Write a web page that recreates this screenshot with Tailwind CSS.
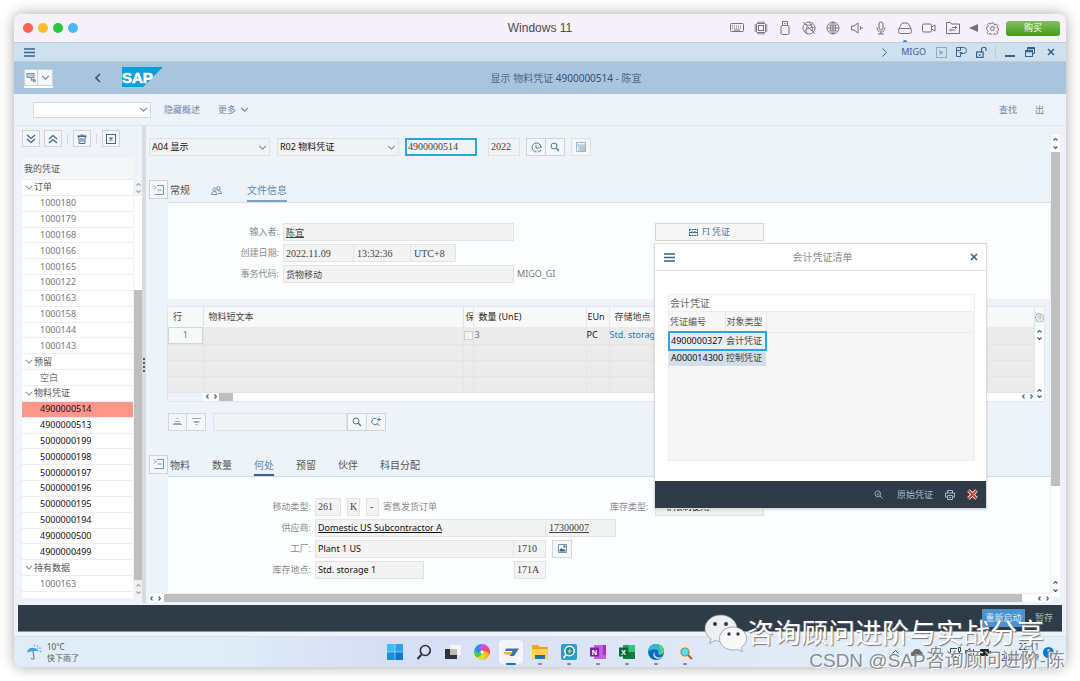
<!DOCTYPE html>
<html lang="zh-CN">
<head>
<meta charset="utf-8">
<meta name="viewport" content="width=device-width, initial-scale=1">
<title>显示 物料凭证 4900000514 - 陈宜</title>
<script src="https://cdn.jsdelivr.net/npm/@tailwindcss/browser@4"></script>
</head>
<body class="bg-white font-['Noto_Sans','Noto_Sans_CJK_SC',sans-serif] text-[9px] leading-3 text-[#555]">

<svg class="hidden" aria-hidden="true">
  <symbol id="down" viewBox="0 0 10 6"><path d="M1 1l4 4 4-4" fill="none" stroke="currentColor" stroke-width="1.3"/></symbol>
  <symbol id="sup" viewBox="0 0 5 3"><path d="M.5 2.500l2-2 2 2" fill="none" stroke="currentColor" stroke-width="1.2"/></symbol>
  <symbol id="sdown" viewBox="0 0 5 3"><path d="M.5 .5l2 2 2-2" fill="none" stroke="currentColor" stroke-width="1.2"/></symbol>
  <symbol id="sleft" viewBox="0 0 3 5"><path d="M2.500 .5l-2 2 2 2" fill="none" stroke="currentColor" stroke-width="1.2"/></symbol>
  <symbol id="sright" viewBox="0 0 3 5"><path d="M.5 .5l2 2-2 2" fill="none" stroke="currentColor" stroke-width="1.2"/></symbol>
  <symbol id="left" viewBox="0 0 6 10"><path d="M5 1L1 5l4 4" fill="none" stroke="currentColor" stroke-width="1.6"/></symbol>
  <symbol id="bars" viewBox="0 0 11 9"><path d="M0 1h11M0 4.5h11M0 8h11" stroke="currentColor" stroke-width="1.3"/></symbol>
  <symbol id="close" viewBox="0 0 8 8"><path d="M1 1l6 6M7 1L1 7" stroke="currentColor" stroke-width="1.6"/></symbol>
  <symbol id="glass" viewBox="0 0 10 10"><circle cx="4" cy="4" r="3" fill="none" stroke="currentColor"/><path d="M6.3 6.3L9 9" stroke="currentColor" stroke-width="1.5"/></symbol>
  <symbol id="panel" viewBox="0 0 12 12"><path d="M4 1.500h6.500v9H1.500M4.500 6h4M1 1.500L3 3.500 1 5.500" fill="none" stroke="currentColor"/></symbol>
  <symbol id="gear" viewBox="0 0 14 14"><path d="M5.900 1h2.200l.4 1.700 1.200.5 1.500-.9 1.500 1.500-.9 1.500.5 1.200 1.200.4v2.200l-1.200.3-.6 1.200.9 1.400-1.500 1.500-1.500-.9-1.200.5-.3 1.200H5.900l-.4-1.500-1.200-.5-1.500.9-1.500-1.500.9-1.500-.5-1.200L.5 8V5.900l1.400-.4.500-1.200-.9-1.500L3 1.300l1.500.9 1.100-.5z" fill="none" stroke="currentColor"/><circle cx="7" cy="7" r="2.200" fill="none" stroke="currentColor"/></symbol>
</svg>

<div class="flex min-h-screen p-[14px]">
<div class="relative flex flex-1 flex-col rounded-lg bg-[#edf3f8] shadow-[0_0_14px_rgba(0,0,0,0.35)]">

  <!-- virtual machine title bar -->
  <div class="relative flex h-7 items-center rounded-t-lg bg-[#f6f0f8] px-[9px]">
    <div class="flex gap-[5px]">
      <span class="size-[10px] rounded-full bg-[#ff5f57]"></span>
      <span class="size-[10px] rounded-full bg-[#febc2e]"></span>
      <span class="size-[10px] rounded-full bg-[#28c840]"></span>
      <span class="size-[10px] rounded-full bg-[#4cb5f5]"></span>
    </div>
    <h1 class="absolute inset-x-0 text-center font-['Liberation_Sans'] text-[12px] leading-4 text-[#4c4a4e]">Windows 11</h1>
    <div class="absolute top-0 right-[6px] flex h-7 items-center text-[#747078]">
      <div class="mr-[9px] flex items-center gap-[10px]">
      <svg class="size-[14px]" viewBox="0 0 14 14" fill="none" stroke="currentColor"><rect x=".5" y="2.500" width="13" height="8" rx="1"/><path d="M2 5h10M2 7h10" stroke-dasharray="1 1"/><path d="M4 9h6"/></svg>
      <svg class="size-[14px]" viewBox="0 0 14 14" fill="none" stroke="currentColor"><rect x="2.500" y="2.500" width="9" height="9" rx="1"/><rect x="4.500" y="4.500" width="5" height="5"/><path d="M4 .5v2M6 .5v2M8 .5v2M10 .5v2M4 11.500v2M6 11.500v2M8 11.500v2M10 11.500v2M.5 4h2M.5 6h2M.5 8h2M.5 10h2M11.500 4h2M11.500 6h2M11.500 8h2M11.500 10h2"/></svg>
      <svg class="size-[14px]" viewBox="0 0 14 14" fill="none" stroke="currentColor"><rect x="3" y="4.500" width="8" height="9" rx="1.500"/><path d="M4.500 4.500v-4h5v4M6 2.500h.8M7.500 2.500h.8"/></svg>
      <svg class="size-[14px]" viewBox="0 0 14 14" fill="none" stroke="currentColor" stroke-width=".9"><circle cx="7" cy="7" r="6"/><path d="M1 1l12 12M4 3.500C6 5 10 4 11 2.500M2.500 11c1-3 3-4 5-3.500M7 1c2 2 4 6 3.500 9M13 7c-2-1-4-1-5 0M5 13C4 10 4 8 5 6"/></svg>
      <svg class="size-[14px]" viewBox="0 0 14 14" fill="none" stroke="currentColor" stroke-width=".9"><circle cx="7" cy="7" r="6"/><path d="M7 1v12M1 7h12M2.500 3.500c3 2 6 2 9 0M2.500 10.500c3-2 6-2 9 0M7 1C3.500 4 3.500 10 7 13M7 1c3.500 3 3.500 9 0 12"/></svg>
      <svg class="size-[14px]" viewBox="0 0 14 14" fill="none" stroke="currentColor"><path d="M1.500 5H4l4-3v10L4 9H1.500zM10 5c.8 1.200.8 2.800 0 4M12 6v2"/></svg>
      <svg class="size-[14px]" viewBox="0 0 14 14" fill="none" stroke="currentColor"><rect x="5" y="1" width="4" height="8" rx="2"/><path d="M3 6.500c0 6 8 6 8 0M7 11v2M4 13h6"/></svg>
      <svg class="size-[14px]" viewBox="0 0 14 14" fill="none" stroke="currentColor"><path d="M.8 8l2.700-5c.3-.6.8-1 1.500-1h4c.7 0 1.200.4 1.500 1l2.700 5"/><rect x=".6" y="7.500" width="12.800" height="5" rx="2"/></svg>
      <svg class="size-[14px]" viewBox="0 0 14 14" fill="none" stroke="currentColor"><rect x=".5" y="3" width="9" height="8" rx="1.500"/><path d="M9.500 6l3.500-2v6l-3.500-2"/></svg>
      <svg class="size-[14px]" viewBox="0 0 14 14" fill="none" stroke="currentColor"><path d="M.5 12.500v-11h4l1 1.500h8v9.500zM4 9h5M5 7.500L3.500 9 5 10.500M10.500 6.500H6M9 5l1.500 1.500L9 8"/></svg>
      </div>
      <svg class="mr-2 h-2 w-[9px]" viewBox="0 0 9 8" fill="currentColor"><path d="M0 4l9-4v8z"/></svg>
      <svg class="mr-[7px] size-[13px]"><use href="#gear"/></svg>
      <button class="h-[15px] w-[54px] rounded-[3px] bg-linear-to-b from-[#7fc05c] to-[#419c14] text-[9px] text-white">购买</button>
    </div>
    <span class="absolute right-[159px] bottom-0 h-[2px] w-1 rounded-t-full bg-[#1a84f7]"></span>
  </div>

  <!-- SAP menu bar -->
  <div class="flex h-5 items-center border-y border-[#b9cddd] bg-[#cfe0ee] pr-[11px] pl-[10px] text-[#35638c]">
    <button aria-label="菜单"><svg class="block h-[9px] w-[11px]"><use href="#bars"/></svg></button>
    <div class="ml-auto flex items-center">
      <svg class="mr-[14px] h-[9px] w-[5px]" viewBox="0 0 5 9" fill="none" stroke="currentColor"><path d="M.5.5l4 4-4 4"/></svg>
      <span class="mr-[10px] text-[9px]">MIGO</span>
      <svg class="mr-[9px] size-[11px] text-[#8fabc4]" viewBox="0 0 11 11" fill="none" stroke="currentColor"><rect x=".5" y=".5" width="10" height="10"/><path d="M4 3.500v4l3-2z" fill="currentColor"/></svg>
      <svg class="mr-[9px] size-[11px]" viewBox="0 0 11 11" fill="none" stroke="currentColor"><path d="M.5 9.500v-9h7a3 3 0 010 6h-3v3zM4.500.5v3h-4M3.500 5.500h3"/></svg>
      <svg class="mr-[8px] size-[11px]" viewBox="0 0 11 11" fill="none" stroke="currentColor" stroke-width="1.200"><rect x=".6" y="5" width="6.500" height="5.400"/><path d="M5.500 5V2.500a2.300 2.300 0 014.600 0V4M3.800 7v2"/></svg>
      <span class="mr-[9px] h-3 w-px bg-[#bccfde]"></span>
      <svg class="mr-[10px] size-[10px]" viewBox="0 0 10 10"><path d="M0 9h10" stroke="currentColor" stroke-width="2"/></svg>
      <svg class="mr-[12px] size-[10px]" viewBox="0 0 10 10" fill="none" stroke="currentColor"><path d="M2.500 3V.5h7v6H8"/><path d="M2.500 1.200h7M.5 4.200h7" stroke-width="2"/><rect x=".5" y="3.500" width="7" height="6"/></svg>
      <button aria-label="关闭"><svg class="block size-2"><use href="#close"/></svg></button>
    </div>
  </div>

  <!-- page header -->
  <header class="relative flex h-8 items-center bg-[#a9c5de] pl-[10px]">
    <div class="flex h-[19px] w-[29px] border-b-2 border-white">
      <button aria-label="对象服务" class="flex w-[14px] items-center justify-center border border-[#c9d3dc] bg-[#f5f7f8] text-[#7c98b2]"><svg class="size-[11px]" viewBox="0 0 11 11"><rect x="1" y="1.500" width="7" height="4" fill="#bccbd9" stroke="currentColor"/><path d="M5 5.500v3h3M7.500 6.500l2.500 2-2.500 2z" fill="currentColor" stroke="currentColor" stroke-width=".6"/></svg></button>
      <button aria-label="展开" class="flex w-[15px] items-center justify-center border border-l-0 border-[#c9d3dc] bg-[#f5f7f8] text-[#6886a3]"><svg class="h-[5px] w-[9px]"><use href="#down"/></svg></button>
    </div>
    <button aria-label="返回" class="ml-[42px] text-[#33587c]"><svg class="block h-[10px] w-[6px]"><use href="#left"/></svg></button>
    <svg class="mb-[2px] ml-[21px] h-5 w-[41px]" viewBox="0 0 41 20" role="img" aria-label="SAP"><path d="M0 0h41L21 20H0z" fill="#069fe0"/><text x="0" y="15.500" font-family="Liberation Sans" font-weight="700" font-size="15" fill="#fff" stroke="#fff" stroke-width=".6">SAP</text></svg>
    <h2 class="absolute inset-x-0 pl-[52px] text-center text-[10px] text-[#49688a]">显示 物料凭证 <span class="text-[#2f5275]">4900000514</span> - 陈宜</h2>
  </header>

  <!-- application toolbar -->
  <div class="flex h-8 items-center border-b border-[#dee6ed] pr-[22px] pl-[19px] text-[#6b8aa8]">
    <div class="relative w-[118px]">
      <select aria-label="命令" class="block h-4 w-full appearance-none border border-[#d3dbe2] bg-white"><option></option></select>
      <svg class="pointer-events-none absolute top-[5px] right-[3px] h-[5px] w-[9px]"><use href="#down"/></svg>
    </div>
    <button class="ml-[13px]">隐藏概述</button>
    <button class="ml-[18px] flex items-center gap-1">更多<svg class="h-[5px] w-[9px]"><use href="#down"/></svg></button>
    <button class="ml-auto">查找</button>
    <button class="ml-[18px]">出</button>
  </div>

  <div class="flex flex-1">

    <!-- overview tree -->
    <aside class="flex w-32 shrink-0 flex-col pt-1 pb-[5px] pl-2">
      <div class="mb-[11px] flex items-center text-[#3d6a95]">
        <button aria-label="全部展开" class="flex h-[17px] w-[18px] items-center justify-center border border-[#ced3d8] bg-[#f5f6f7]"><svg class="size-[10px]" viewBox="0 0 10 10" fill="none" stroke="currentColor" stroke-width="1.300"><path d="M1 1l4 3.500L9 1M1 5l4 3.500L9 5"/></svg></button>
        <button aria-label="全部折叠" class="ml-1 flex h-[17px] w-[18px] items-center justify-center border border-[#ced3d8] bg-[#f5f6f7]"><svg class="size-[10px]" viewBox="0 0 10 10" fill="none" stroke="currentColor" stroke-width="1.300"><path d="M1 5l4-3.500L9 5M1 9l4-3.500L9 9"/></svg></button>
        <span class="mx-[5px] h-[10px] w-px bg-[#d3dae0]"></span>
        <button aria-label="删除" class="flex h-[17px] w-[18px] items-center justify-center border border-[#ced3d8] bg-[#f5f6f7]"><svg class="size-[10px]" viewBox="0 0 10 10" fill="none" stroke="currentColor"><path d="M.5 2.200h9" stroke-width="1.600"/><path d="M3.500 1h3M1.800 3l.4 6.500h5.600L8.200 3M4 4v4M6 4v4"/></svg></button>
        <span class="mx-[5px] h-[10px] w-px bg-[#d3dae0]"></span>
        <button aria-label="关闭概述" class="flex h-[17px] w-[18px] items-center justify-center border border-[#ced3d8] bg-[#f5f6f7]"><svg class="size-[10px]" viewBox="0 0 10 10" fill="none" stroke="currentColor"><rect x=".5" y=".5" width="9" height="9"/><path d="M3.500 3.500l3 3M6.500 3.500l-3 3" stroke-width="1.300"/></svg></button>
      </div>
      <h3 class="mr-[9px] h-[22px] border-b border-[#e8ebed] bg-[#f5f6f7] pl-[2px] leading-[22px]">我的凭证</h3>
      <div class="flex flex-1">
        <ul class="flex flex-1 flex-col bg-white pb-[6px] text-[#777] [&>li]:flex [&>li]:flex-1 [&>li]:items-center [&>li]:border-b [&>li]:border-[#eceef0] [&>li]:pl-[18px]">
          <li><span class="-ml-[15px] flex items-center gap-px text-[#555]"><svg class="h-[5px] w-2 text-[#6f93b3]"><use href="#down"/></svg>订单</span></li>
          <li>1000180</li>
          <li>1000179</li>
          <li>1000168</li>
          <li>1000166</li>
          <li>1000165</li>
          <li>1000122</li>
          <li>1000163</li>
          <li>1000158</li>
          <li>1000144</li>
          <li>1000143</li>
          <li><span class="-ml-[15px] flex items-center gap-px text-[#555]"><svg class="h-[5px] w-2 text-[#6f93b3]"><use href="#down"/></svg>预留</span></li>
          <li>空白</li>
          <li><span class="-ml-[15px] flex items-center gap-px text-[#555]"><svg class="h-[5px] w-2 text-[#6f93b3]"><use href="#down"/></svg>物料凭证</span></li>
          <li class="bg-[#ff968c] text-[#111]">4900000514</li>
          <li class="text-[#111]">4900000513</li>
          <li class="text-[#111]">5000000199</li>
          <li class="text-[#111]">5000000198</li>
          <li class="text-[#111]">5000000197</li>
          <li class="text-[#111]">5000000196</li>
          <li class="text-[#111]">5000000195</li>
          <li class="text-[#111]">5000000194</li>
          <li class="text-[#111]">4900000500</li>
          <li class="text-[#111]">4900000499</li>
          <li><span class="-ml-[15px] flex items-center gap-px text-[#555]"><svg class="h-[5px] w-2 text-[#6f93b3]"><use href="#down"/></svg>持有数据</span></li>
          <li>1000163</li>
        </ul>
        <div class="ml-px flex w-2 flex-col items-center bg-white text-[#a8adb2]">
          <div class="flex w-full flex-col items-center gap-1 bg-[#f1f1f1] py-[3px]"><svg class="h-[3px] w-[5px]"><use href="#sup"/></svg><svg class="h-[3px] w-[5px]"><use href="#sdown"/></svg></div>
          <div class="mt-[94px] w-full flex-1 bg-[#bfbfbf]"></div>
          <div class="flex w-full flex-col items-center gap-1 bg-[#f1f1f1] py-[4px]"><svg class="h-[3px] w-[5px]"><use href="#sup"/></svg><svg class="h-[3px] w-[5px]"><use href="#sdown"/></svg></div>
        </div>
      </div>
    </aside>

    <div class="flex w-1 shrink-0 items-center justify-center bg-[#d9dbde]"><svg class="h-[14px] w-[2px]" viewBox="0 0 2 14" fill="#35638c"><path d="M0 0h2v2H0zM0 4h2v2H0zM0 8h2v2H0zM0 12h2v2H0z"/></svg></div>

    <!-- work area -->
    <main class="flex min-w-0 flex-1 flex-col pt-3 pb-px pl-[3px]">
      <div class="flex h-[18px] text-[#444]">
        <div class="relative w-[121px]">
          <select aria-label="操作" class="block h-full w-full appearance-none border border-[#dfe2e5] bg-[#f1f2f3] pl-[2px] text-[#111]"><option>A04 显示</option></select>
          <svg class="pointer-events-none absolute top-[7px] right-[3px] h-[5px] w-[9px] text-[#6f93b3]"><use href="#down"/></svg>
        </div>
        <div class="relative ml-[7px] w-[122px]">
          <select aria-label="参考凭证" class="block h-full w-full appearance-none border border-[#dfe2e5] bg-[#f1f2f3] pl-[2px] text-[#111]"><option>R02 物料凭证</option></select>
          <svg class="pointer-events-none absolute top-[7px] right-[3px] h-[5px] w-[9px] text-[#6f93b3]"><use href="#down"/></svg>
        </div>
        <input aria-label="物料凭证" readonly value="4900000514" class="ml-[6px] w-[72px] border-2 border-[#2ea3dd] bg-[#f1f2f3] px-px font-['Liberation_Serif'] text-[10px]">
        <input aria-label="年度" readonly value="2022" class="ml-[11px] w-8 border border-[#dfe2e5] bg-[#f1f2f3] px-[2px] font-['Liberation_Serif'] text-[10px]">
        <button aria-label="执行" class="ml-[6px] flex w-5 items-center justify-center border border-[#cfd4d8] bg-[#f5f6f7] text-[#4f7ba3]"><svg class="size-[11px]" viewBox="0 0 11 11" fill="none" stroke="currentColor"><path d="M10 6A4.500 4.500 0 105.500 10M10 6A4.500 4.500 0 009 2.500M5 3v3h3.500M6.500 8.500l2 1.500L10 8"/></svg></button>
        <button aria-label="查找" class="-ml-px flex w-5 items-center justify-center border border-[#cfd4d8] bg-[#f5f6f7] text-[#4f7ba3]"><svg class="size-[10px]"><use href="#glass"/></svg></button>
        <button aria-label="布局" class="ml-[6px] flex w-5 items-center justify-center border border-[#dde1e4] bg-[#f5f6f7] text-[#9db6cc]"><svg class="size-[10px]" viewBox="0 0 10 10" fill="none" stroke="currentColor"><path d="M.5.5h9v9h-9zM.5 3h9M3 3v6.500"/><path d="M4 4h5v5H4z" fill="#b5c7d7" stroke="none"/></svg></button>
      </div>

      <!-- header tabs -->
      <div class="mt-6 flex h-[23px] items-start">
        <button aria-label="收起抬头" class="flex size-[19px] items-center justify-center border border-[#ced3d8] bg-[#f5f6f7] text-[#7397b8]"><svg class="size-3"><use href="#panel"/></svg></button>
        <nav class="flex h-full flex-1 items-stretch gap-[21px] border-b border-[#d5e1ec] pl-[2px] text-[10px] leading-5">
          <a href="#general">常规</a>
          <a href="#partner" aria-label="业务伙伴" class="flex items-center text-[#6f93b3]"><svg class="mb-[2px] h-[9px] w-[11px]" viewBox="0 0 11 9" fill="none" stroke="currentColor"><circle cx="3.500" cy="3.500" r="1.600"/><circle cx="7.500" cy="2.200" r="1.700"/><path d="M.5 8.500c0-4 5.500-4 5.500 0zM6.500 5c2.500-1 4 .5 4 2.500H7"/></svg></a>
          <a href="#doc" class="ml-1 border-b-2 border-[#7fa3c3] text-[#5d8ab2]">文件信息</a>
        </nav>
      </div>
      <section class="mr-px ml-[19px] flex flex-col gap-[3px] bg-[#fcfdfe] pt-5 pb-4 text-[#444]">
        <div class="flex h-[18px] items-center">
          <label for="user" class="w-[111px] text-right text-[#8b8b8b]">输入者:</label>
          <input id="user" readonly value="陈宜" class="ml-1 h-full w-[231px] border border-[#e2e3e4] bg-[#f3f3f3] px-[2px] underline">
          <button class="ml-[141px] flex h-full w-[109px] items-center justify-center gap-1 border border-[#d3d6d9] bg-[#f7f7f7] text-[#55789a]"><svg class="size-[9px]" viewBox="0 0 9 9" fill="none" stroke="#35638c"><path d="M0 1.500h9M0 7.500h9M.5 1v7M8.500 1v7M1 4.500h7M3 3v3M6 3v3" stroke-dasharray="2 .6"/></svg>FI 凭证</button>
        </div>
        <div class="flex h-[18px] items-center">
          <label for="date" class="w-[111px] text-right text-[#8b8b8b]">创建日期:</label>
          <input id="date" readonly value="2022.11.09" class="ml-1 h-full w-[71px] border border-[#e2e3e4] bg-[#f3f3f3] px-[2px] font-['Liberation_Serif'] text-[10px]">
          <input aria-label="创建时间" readonly value="13:32:36" class="h-full w-[57px] border border-l-0 border-[#e2e3e4] bg-[#f3f3f3] px-[3px] font-['Liberation_Serif'] text-[10px]">
          <input aria-label="时区" readonly value="UTC+8" class="h-full w-[45px] border border-l-0 border-[#e2e3e4] bg-[#f3f3f3] px-[3px] font-['Liberation_Serif'] text-[10px]">
        </div>
        <div class="flex h-[18px] items-center">
          <label for="tcode" class="w-[111px] text-right text-[#8b8b8b]">事务代码:</label>
          <input id="tcode" readonly value="货物移动" class="ml-1 h-full w-[231px] border border-[#e2e3e4] bg-[#f3f3f3] px-[2px]">
          <span class="ml-[3px] text-[#777]">MIGO_GI</span>
        </div>
      </section>

      <!-- item table -->
      <div class="mt-[7px] mr-[6px] ml-[18px] border border-[#e2e7eb] bg-white">
        <div class="flex">
          <table class="w-full flex-1 table-fixed border-collapse bg-[#ebebeb] text-[#444] [&_td]:border-r [&_td]:border-b [&_td]:border-[#e4e5e6] [&_td]:p-0 [&_th]:border-r [&_th]:border-[#e2e4e6] [&_th]:p-0 [&_th]:text-left [&_th]:font-normal">
            <colgroup><col class="w-[35px]"><col class="w-[260px]"><col class="w-[10px]"><col class="w-[113px]"><col class="w-[23px]"><col class="w-[69px]"><col></colgroup>
            <thead><tr class="h-5 bg-[#f7f8f8] whitespace-nowrap"><th><span class="pl-[5px]">行</span></th><th><span class="pl-[5px]">物料短文本</span></th><th class="overflow-hidden"><span class="pl-[2px]">保</span></th><th class="text-[#222]"><span class="pl-[5px]">数量 (UnE)</span></th><th class="text-[#222]"><span class="pl-px">EUn</span></th><th><span class="pl-[5px]">存储地点</span></th><th></th></tr></thead>
            <tbody>
              <tr class="h-[17px] whitespace-nowrap"><td class="bg-[#f7f8f8] text-center text-[#4f7ba3] outline -outline-offset-1 outline-[#d3d6d9]">1</td><td></td><td><input type="checkbox" aria-label="选择" class="block size-[9px] appearance-none border border-[#cfd2d5] bg-[#f3f3f3]"></td><td class="text-[#3f86b8]"><span class="pl-px">3</span></td><td class="text-[#111]">PC</td><td class="overflow-hidden text-[#1f78b0]">Std. storage 1</td><td></td></tr>
              <tr class="h-4"><td></td><td></td><td></td><td></td><td></td><td></td><td></td></tr>
              <tr class="h-4"><td></td><td></td><td></td><td></td><td></td><td></td><td></td></tr>
              <tr class="h-4"><td></td><td></td><td></td><td></td><td></td><td></td><td></td></tr>
            </tbody>
          </table>
          <div class="flex w-[9px] shrink-0 flex-col items-center text-[#35638c]">
            <div class="flex h-5 w-full items-center justify-center bg-[#f7f8f8]"><svg class="size-[9px] shrink-0 text-[#6f93b3]"><use href="#gear"/></svg></div>
            <svg class="mt-[3px] h-[3px] w-[5px]"><use href="#sup"/></svg><svg class="mt-1 h-[3px] w-[5px]"><use href="#sdown"/></svg>
            <svg class="mt-auto mb-px h-[3px] w-[5px]"><use href="#sup"/></svg>
          </div>
        </div>
        <div class="flex h-2 items-center text-[#35638c]">
          <div class="h-full w-[35px] bg-[#edf3f8]"></div>
          <svg class="ml-[3px] h-[5px] w-[3px]"><use href="#sleft"/></svg><svg class="ml-[5px] h-[5px] w-[3px]"><use href="#sright"/></svg>
          <div class="ml-[2px] h-full w-[14px] bg-[#bfbfbf]"></div>
          <svg class="ml-auto h-[5px] w-[3px]"><use href="#sleft"/></svg><svg class="ml-[5px] h-[5px] w-[3px]"><use href="#sright"/></svg><svg class="mr-[2px] ml-[4px] h-[3px] w-[5px]"><use href="#sdown"/></svg>
        </div>
      </div>

      <div class="mt-[11px] ml-[19px] flex h-[18px] text-[#4f7ba3]">
        <button aria-label="上移" class="flex w-[19px] items-center justify-center border border-[#d3d6d9] bg-[#f5f6f7] text-[#8fabc4]"><svg class="h-[7px] w-[9px]" viewBox="0 0 9 7" stroke="currentColor"><path d="M3.500.5h2M2 3.500h5M0 6.500h9M1 5.500h7" /></svg></button>
        <button aria-label="下移" class="flex w-[19px] items-center justify-center border border-l-0 border-[#d3d6d9] bg-[#f5f6f7] text-[#8fabc4]"><svg class="h-[7px] w-[9px]" viewBox="0 0 9 7" stroke="currentColor"><path d="M0 .5h9M1.500 3.500h6M2.500 4.500h4M3.500 6.500h2"/></svg></button>
        <input aria-label="查找行" class="ml-[7px] w-[134px] border border-[#dfe2e5] bg-[#f1f2f3]">
        <button aria-label="查找" class="flex w-[20px] items-center justify-center border border-[#cfd4d8] bg-[#f5f6f7]"><svg class="size-[10px]"><use href="#glass"/></svg></button>
        <button aria-label="查找下一个" class="-ml-px flex w-[20px] items-center justify-center border border-[#cfd4d8] bg-[#f5f6f7]"><svg class="size-[10px]" viewBox="0 0 10 10" fill="none" stroke="currentColor"><path d="M5.500 1.700A3.200 3.200 0 106.800 6M6.300 6.500L8.500 9M8 .5v4M6 2.500h4"/></svg></button>
      </div>

      <!-- detail tabs -->
      <div class="mt-6 flex h-[22px] items-start">
        <button aria-label="收起明细" class="flex size-[19px] items-center justify-center border border-[#ced3d8] bg-[#f5f6f7] text-[#7397b8]"><svg class="size-3"><use href="#panel"/></svg></button>
        <nav class="flex h-full flex-1 gap-[22px] border-b border-[#cbdcea] pl-[2px] text-[10px] leading-5">
          <a href="#material">物料</a>
          <a href="#quantity">数量</a>
          <a href="#where" class="border-b-2 border-[#35638c] text-[#5d8ab2]">何处</a>
          <a href="#reserve">预留</a>
          <a href="#partner2">伙伴</a>
          <a href="#account">科目分配</a>
        </nav>
      </div>
      <section class="mr-px mb-px ml-[19px] flex flex-1 flex-col gap-[3px] bg-[#fcfdfe] pt-[21px] text-[#111]">
        <div class="flex h-[18px] items-center">
          <label for="mvt" class="w-[143px] text-right text-[#8b8b8b]">移动类型:</label>
          <input id="mvt" readonly value="261" class="ml-1 h-full w-[26px] border border-[#e2e3e4] bg-[#f3f3f3] px-[2px] font-['Liberation_Serif'] text-[10px] text-[#444]">
          <input aria-label="特殊库存" readonly value="K" class="ml-[6px] h-full w-[13px] border border-[#e2e3e4] bg-[#f3f3f3] px-[2px] font-['Liberation_Serif'] text-[10px] text-[#444]">
          <input aria-label="借贷标识" readonly value="-" class="ml-[6px] h-full w-[13px] border border-[#e2e3e4] bg-[#f3f3f3] px-[3px] font-['Liberation_Serif'] text-[10px] text-[#444]">
          <span class="ml-1 text-[#8b8b8b]">寄售发货订单</span>
          <label for="stock" class="ml-[173px] text-[#8b8b8b]">库存类型:</label>
          <input id="stock" readonly value="非限制使用" class="ml-[7px] h-full w-[109px] border border-[#e2e3e4] bg-[#f3f3f3] px-2">
        </div>
        <div class="flex h-[18px] items-center">
          <label for="vendor" class="w-[143px] text-right text-[#8b8b8b]">供应商:</label>
          <input id="vendor" readonly value="Domestic US Subcontractor A" class="ml-1 h-full w-[231px] border border-[#e2e3e4] bg-[#f3f3f3] px-[2px] underline">
          <input aria-label="供应商编号" readonly value="17300007" class="h-full w-[70px] border border-l-0 border-[#e2e3e4] bg-[#f3f3f3] px-[3px] font-['Liberation_Serif'] text-[10px] text-[#444] underline">
        </div>
        <div class="flex h-[18px] items-center">
          <label for="plant" class="w-[143px] text-right text-[#8b8b8b]">工厂:</label>
          <input id="plant" readonly value="Plant 1 US" class="ml-1 h-full w-[199px] border border-[#e2e3e4] bg-[#f3f3f3] px-[2px]">
          <input aria-label="工厂代码" readonly value="1710" class="h-full w-8 border border-l-0 border-[#e2e3e4] bg-[#f3f3f3] px-[3px] font-['Liberation_Serif'] text-[10px] text-[#444]">
          <button aria-label="图片" class="ml-[6px] flex h-full w-5 items-center justify-center border border-[#d3d6d9] bg-[#f7f7f7] text-[#35638c]"><svg class="size-[9px]" viewBox="0 0 9 9" fill="none" stroke="currentColor"><path d="M.5.5h8v8h-8z" stroke="#6f93b3"/><path d="M1.500 7.500V6l2-2L5 5.500 6 5l1.500 1.500v1z" fill="currentColor" stroke="none"/><path d="M5.500 1.500h2v2h-2z" fill="currentColor" stroke="none"/></svg></button>
        </div>
        <div class="flex h-[18px] items-center">
          <label for="sloc" class="w-[143px] text-right text-[#8b8b8b]">库存地点:</label>
          <input id="sloc" readonly value="Std. storage 1" class="ml-1 h-full w-[109px] border border-[#e2e3e4] bg-[#f3f3f3] px-[2px]">
          <input aria-label="库存地点代码" readonly value="171A" class="ml-[90px] h-full w-8 border border-[#e2e3e4] bg-[#f3f3f3] px-[2px] font-['Liberation_Serif'] text-[10px] text-[#444]">
        </div>
      </section>
      <div class="flex h-2 items-center bg-white pr-[2px] text-[#35638c]">
        <svg class="ml-px h-[5px] w-[3px]"><use href="#sleft"/></svg><svg class="mr-[3px] ml-[5px] h-[5px] w-[3px]"><use href="#sright"/></svg>
        <div class="h-full flex-1 bg-[#bfbfbf]"></div>
        <svg class="ml-4 h-[5px] w-[3px]"><use href="#sleft"/></svg><svg class="ml-[5px] h-[5px] w-[3px]"><use href="#sright"/></svg>
      </div>
    </main>

    <div class="mt-[9px] mr-[6px] mb-[6px] flex w-[9px] shrink-0 flex-col items-center bg-white text-[#35638c]">
      <svg class="mt-[3px] h-[3px] w-[5px]"><use href="#sup"/></svg><svg class="mt-[5px] h-[3px] w-[5px]"><use href="#sdown"/></svg>
      <div class="mt-[3px] w-full flex-1 bg-[#bfbfbf]"></div>
      <svg class="mt-[95px] h-[3px] w-[5px]"><use href="#sup"/></svg><svg class="mt-[5px] mb-[5px] h-[3px] w-[5px]"><use href="#sdown"/></svg>
    </div>
  </div>

  <!-- footer actions -->
  <footer class="mx-1 mt-[2px] mb-1 flex h-[27px] items-center justify-end border-b border-[#8795a1] bg-[#303b48] pr-[9px] text-[#a3b9cc]">
    <button class="h-[18px] w-[43px] bg-[#4a93cf] text-[#dbeaf6]">重新启动</button>
    <button class="ml-[10px]">暂存</button>
  </footer>

  <!-- Windows taskbar -->
  <div class="relative flex h-[31px] items-center justify-center rounded-b-lg border-t border-[#d6e3ef] bg-linear-to-r from-[#e0edf8] from-20% via-[#d6def4] via-35% to-[#e3eff8] to-85% px-3">
    <div class="absolute left-3 flex items-center gap-[5px] text-[8px] leading-[11px]">
      <svg class="size-4" viewBox="0 0 16 16" fill="none"><path d="M1 8.500C2 3.500 8 1.500 13 7.500 9 6.500 4 7.500 1 8.500z" fill="#3b9cf0"/><path d="M7 7l1 7c.2 1.500-2.500 1.500-2.700 0" stroke="#7b8794" stroke-width="1.300"/><path d="M8 1l1 1M11 1.500l1 1M13.500 3.500l1 1M15 7l-1 1M11 4l1 .5" stroke="#5aa9ea" stroke-width="1.200"/></svg>
      <div><p>10°C</p><p>快下雨了</p></div>
    </div>
    <div class="flex items-center gap-[5px] [&>button]:relative [&>button]:flex [&>button]:size-6 [&>button]:items-center [&>button]:justify-center">
      <button aria-label="开始"><svg class="size-4" viewBox="0 0 16 16"><path d="M0 0h7.700v7.700H0z" fill="#3dbdf2"/><path d="M8.300 0H16v7.700H8.300z" fill="#27a3e8"/><path d="M0 8.300h7.700V16H0z" fill="#178fdd"/><path d="M8.300 8.300H16V16H8.300z" fill="#0a7ad1"/></svg></button>
      <button aria-label="搜索"><svg class="size-4" viewBox="0 0 16 16" fill="none" stroke="#2d2f33"><circle cx="9.300" cy="6.500" r="5" stroke-width="1.600"/><path d="M5.500 10.500l-4 4.500" stroke-width="2"/></svg></button>
      <button aria-label="任务视图"><svg class="size-4" viewBox="0 0 16 16"><path d="M5 1h11v10H5z" fill="#f4f4f4"/><path d="M0 5h5v6h7v4H0z" fill="#333"/><path d="M5 5h7v6H5z" fill="#bbb"/></svg></button>
      <button aria-label="照片"><svg class="size-4" viewBox="0 0 16 16"><g id="petals"><path d="M8 8C4.500 6 4.500 1 8 0c3 0 5.500 1.500 7 4.200C12 3 8.500 4.500 8 8z" fill="#d14df0"/><path d="M8 8C4.500 6 4.500 1 8 0c3 0 5.500 1.500 7 4.200C12 3 8.500 4.500 8 8z" fill="#fb4a55" transform="rotate(60 8 8)"/><path d="M8 8C4.500 6 4.500 1 8 0c3 0 5.500 1.500 7 4.200C12 3 8.500 4.500 8 8z" fill="#fdb92c" transform="rotate(120 8 8)"/><path d="M8 8C4.500 6 4.500 1 8 0c3 0 5.500 1.500 7 4.200C12 3 8.500 4.500 8 8z" fill="#d9e02f" transform="rotate(180 8 8)"/><path d="M8 8C4.500 6 4.500 1 8 0c3 0 5.500 1.500 7 4.200C12 3 8.500 4.500 8 8z" fill="#46c94f" transform="rotate(240 8 8)"/><path d="M8 8C4.500 6 4.500 1 8 0c3 0 5.500 1.500 7 4.200C12 3 8.500 4.500 8 8z" fill="#2b8ff5" transform="rotate(300 8 8)"/></g><circle cx="8" cy="8" r="1.500" fill="#fff"/></svg></button>
      <button aria-label="SAP Logon" class="rounded-sm bg-[#f3f5fb]"><svg class="size-4" viewBox="0 0 16 16"><path d="M3 4.500h13l-5 7.500H6.500l3-5H2z" fill="#3f73a3"/><path d="M.5 8h9l-1.500 2.500H2z" fill="#f4b229"/></svg><span class="absolute bottom-[-1px] h-[2px] w-[10px] rounded-full bg-[#0a78d4]"></span></button>
      <button aria-label="文件资源管理器"><svg class="size-4" viewBox="0 0 16 16"><path d="M0 1h6l2 2h8v12H0z" fill="#f0a51c"/><path d="M0 5h16v10H0z" fill="#ffd04a"/><path d="M3 15v-4h10v4z" fill="#1e72bd"/></svg><span class="absolute bottom-[-1px] h-[2px] w-1 rounded-full bg-[#84878e]"></span></button>
      <button aria-label="远程工具"><svg class="size-4" viewBox="0 0 16 16"><rect width="16" height="16" rx="2" fill="#269fca"/><circle cx="8.500" cy="7" r="4.700" fill="#1b85b0" stroke="#fff" stroke-width="1.500"/><path d="M5 10.500L2.500 14" stroke="#fff" stroke-width="1.600"/><path d="M9.500 3.500L6.500 8h2l-1 3 3.500-4.500h-2z" fill="#ffcf3a"/></svg><span class="absolute bottom-[-1px] h-[2px] w-1 rounded-full bg-[#84878e]"></span></button>
      <button aria-label="OneNote"><svg class="size-4" viewBox="0 0 16 16"><path d="M4 1h12v14H4z" fill="#c75be6"/><path d="M13 1h3v5h-3zM13 6h3v5h-3z" fill="#a334c7"/><path d="M0 3.500h9v9H0z" fill="#7d21a8"/><text x="1.700" y="10.800" font-family="Liberation Sans" font-size="7.500" font-weight="700" fill="#fff">N</text></svg><span class="absolute bottom-[-1px] h-[2px] w-1 rounded-full bg-[#84878e]"></span></button>
      <button aria-label="Excel"><svg class="size-4" viewBox="0 0 16 16"><path d="M4 1h12v14H4z" fill="#21a366"/><path d="M10 1h6v7h-6z" fill="#33c481"/><path d="M4 8h12v7H4z" fill="#107c41"/><path d="M0 3.500h9v9H0z" fill="#0e6537"/><text x="2" y="10.800" font-family="Liberation Sans" font-size="7.500" font-weight="700" fill="#fff">X</text></svg><span class="absolute bottom-[-1px] h-[2px] w-1 rounded-full bg-[#84878e]"></span></button>
      <button aria-label="Edge"><svg class="size-4" viewBox="0 0 16 16"><circle cx="8" cy="8" r="8" fill="#1169bd"/><path d="M0 8C0 3 4 0 8 0s8 3 8 6.500c0 3-2.500 4.500-5 4-1.500-.3-1-1.500-.5-2.500C10.500 5 4 3.500 0 8z" fill="#2fb9d6"/><path d="M9 0c5 .5 7 4 7 6.500 0 3-2.500 4.500-5 4 3-3 2-8-2-10.500z" fill="#5fd26b"/><path d="M7 8c-1.500 3 1 6 5 5.500 1.500-.3 2-.5 2.500-1-2 3-8 3-9-1-.3-1.500.3-3 1.500-3.500z" fill="#e2edf9"/></svg><span class="absolute bottom-[-1px] h-[2px] w-1 rounded-full bg-[#84878e]"></span></button>
      <button aria-label="放大镜"><svg class="size-4" viewBox="0 0 16 16"><path d="M2 0h9l3 3v12H2z" fill="#f2e6d3"/><circle cx="8" cy="8" r="4" fill="#4fe0ea" stroke="#7c8a94" stroke-width="1.200"/><path d="M11 11l4 4" stroke="#b05a36" stroke-width="2"/></svg><span class="absolute bottom-[-1px] h-[2px] w-1 rounded-full bg-[#84878e]"></span></button>
    </div>
    <div class="absolute right-3 flex items-center text-[8px] leading-[11px] text-[#444]">
      <svg class="mr-3 h-[4px] w-[7px]" viewBox="0 0 7 4"><path d="M.5 3.500l3-3 3 3" fill="none" stroke="currentColor"/></svg>
      <svg class="mr-[7px] h-[7px] w-3" viewBox="0 0 12 7"><path d="M2 7a2 2 0 01-.5-4C3-1 9-1 10 2.500 12.500 3 12 7 10 7z" fill="#6b6b6b"/></svg>
      <span class="mr-2 text-[12px] text-[#777]">中</span>
      <svg class="mr-[4px] size-[11px]" viewBox="0 0 11 11" fill="none" stroke="currentColor"><path d="M7 1.500H.5v6h7V6M2 9.500h4M8.500.5h2v4h-2zM9.500 4.500V9"/></svg>
      <svg class="mr-[5px] size-[10px]" viewBox="0 0 10 10" fill="none" stroke="currentColor"><path d="M.5 3.500h2L5 1.500v7l-2.500-2h-2zM6.500 3.500v3M8.500 2v6"/></svg>
      <svg class="mr-[10px] h-[7px] w-[11px]" viewBox="0 0 11 7"><rect width="9" height="7" rx="1" fill="#222"/><path d="M9.500 2H11v3H9.500z" fill="#222"/></svg>
      <div class="mr-1 text-right"><p>22:11</p><p>2022/11/9</p></div>
      <span class="flex size-[11px] items-center justify-center rounded-full bg-[#0a78d4] text-white">1</span>
    </div>
  </div>

  <!-- accounting document list dialog -->
  <div role="dialog" aria-labelledby="dlg" class="absolute top-[229px] right-[79px] flex h-[266px] w-[333px] flex-col border border-[#dadde0] bg-white shadow-sm">
    <div class="flex h-[27px] items-center border-b border-[#dcdfe2] pr-2 pl-[9px] text-[#35638c]">
      <button aria-label="菜单"><svg class="block h-[9px] w-[11px]"><use href="#bars"/></svg></button>
      <h2 id="dlg" class="flex-1 text-center text-[10px] text-[#8b8b8b]">会计凭证清单</h2>
      <button aria-label="关闭"><svg class="block size-2"><use href="#close"/></svg></button>
    </div>
    <div class="mr-[11px] mt-[23px] mb-5 ml-[13px] flex-1 border border-[#eceeef] bg-[#f6f6f6]">
      <h3 class="h-[17px] border-b border-[#eceeef] bg-white pl-px text-[10px] leading-4 text-[#666]">会计凭证</h3>
      <table class="w-full table-fixed border-collapse [&_td]:p-0 [&_th]:p-0 [&_th]:text-left [&_th]:font-normal">
        <colgroup><col class="w-[56px]"><col class="w-[41px]"><col></colgroup>
        <thead><tr class="h-5 border-b border-[#eaecee] whitespace-nowrap"><th class="border-r border-[#e4e6e8]"><span class="pl-px">凭证编号</span></th><th class="border-r border-[#e4e6e8]"><span class="pl-px">对象类型</span></th><th></th></tr></thead>
        <tbody class="text-[#111]">
          <tr class="h-[18px] whitespace-nowrap"><td colspan="2" class="bg-[#ebeeef] outline-2 -outline-offset-1 outline-[#2ea3dd]"><span class="inline-block w-[57px] pl-[2px]">4900000327</span><span class="text-[#444]">会计凭证</span></td><td></td></tr>
          <tr class="h-4 whitespace-nowrap"><td colspan="2" class="bg-[#d3deeb]"><span class="inline-block w-[57px] pl-[2px]">A000014300</span><span class="text-[#444]">控制凭证</span></td><td></td></tr>
        </tbody>
      </table>
    </div>
    <div class="flex h-[27px] items-center justify-end bg-[#303b48] pr-[8px] text-[#a3b9cc]">
      <button aria-label="选择" class="mr-[14px]"><svg class="block size-[9px]" viewBox="0 0 10 10" fill="none" stroke="currentColor"><circle cx="4.200" cy="4.200" r="3.200"/><path d="M3 4.500l1.200 1L6 3M6.500 6.500l3 3" /></svg></button>
      <button class="mr-3">原始凭证</button>
      <button aria-label="打印" class="mr-3"><svg class="block size-[10px]" viewBox="0 0 10 10" fill="none" stroke="currentColor"><path d="M2.500 3V.5h5V3M2.500 7H.5V3h9v4h-2M2.500 5.500h5v4h-5zM4 7.500h2"/></svg></button>
      <button aria-label="取消"><svg class="block size-[11px]" viewBox="0 0 11 11"><path d="M1.500 1.500l8 8M9.500 1.500l-8 8" stroke="#fff" stroke-width="3.500"/><path d="M1.500 1.500l8 8M9.500 1.500l-8 8" stroke="#d8382c" stroke-width="2"/></svg></button>
    </div>
  </div>

</div>
</div>

<!-- watermarks -->
<div class="absolute top-[611px] right-[36px] flex items-center text-[27px] leading-[44px] whitespace-nowrap text-white [text-shadow:1px_1px_1px_#777]">
  <svg class="h-[38px] w-[43px]" viewBox="0 0 43 38"><path d="M17 1C8 1 1 7 1 14.500c0 4.500 2.500 8 6 10.500L5.500 29.500l5.500-3c2 .5 4 1 6 1 9 0 16-6 16-13S26 1 17 1z" fill="#eceeef" stroke="#8c9196" stroke-width=".7"/><path d="M29 13c-7.500 0-13.500 5-13.500 11.500S21.500 36 29 36c1.500 0 3-.3 4.500-.7l5 2.500-1.300-4.300c3-2 5.300-5 5.300-9C42.500 18 36.500 13 29 13z" fill="#f8f8f9" stroke="#8c9196" stroke-width=".7"/><g fill="#303b48"><circle cx="11" cy="10" r="2"/><circle cx="22" cy="10" r="2"/><circle cx="25" cy="20" r="1.700"/><circle cx="34" cy="20" r="1.700"/></g></svg>
  <span>咨询顾问进阶与实战分享</span>
</div>
<div class="absolute top-[649px] right-[15px] font-['Liberation_Sans','Noto_Sans_CJK_SC',sans-serif] text-[19px] leading-6 whitespace-nowrap text-[#8a8d91] [text-shadow:1px_1px_0_#fff]">CSDN @SAP咨询顾问进阶-陈</div>
</body>
</html>
